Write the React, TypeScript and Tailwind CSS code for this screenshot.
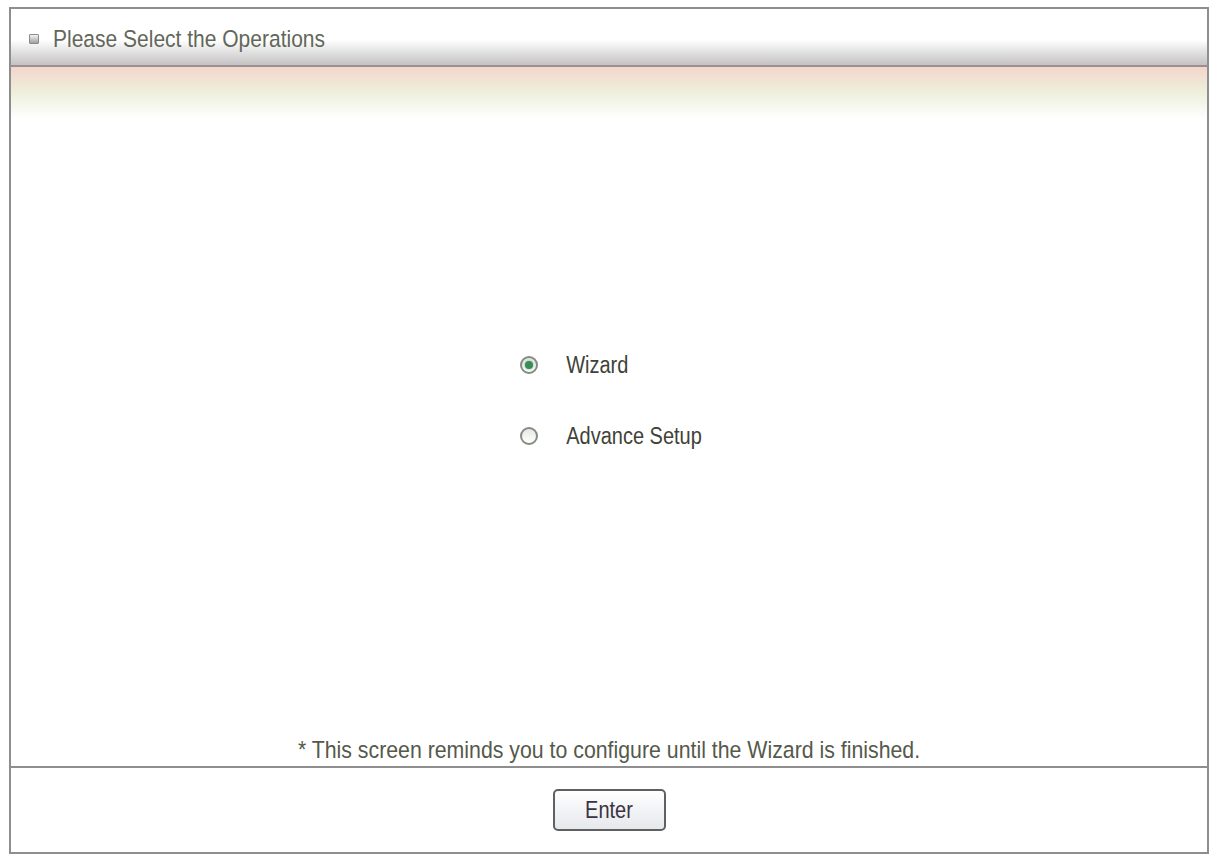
import React, { useState } from "react";

const font = { fontFamily: "'Liberation Sans Narrow', 'Liberation Sans', Arial, sans-serif" };

function Radio({ checked }: { checked: boolean }) {
  return (
    <span className="flex h-[18px] w-[18px] items-center justify-center rounded-full border-2 border-[#858a82] bg-gradient-to-b from-[#e4e8e3] to-white">
      {checked && <span className="h-[8px] w-[8px] rounded-full bg-[#3c8a5a] shadow-[0_0_3px_#6cc08a]" />}
    </span>
  );
}

const options = ["Wizard", "Advance Setup"];

export default function App() {
  const [mode, setMode] = useState("Wizard");

  return (
    <div className="h-[856px] w-[1212px] bg-white pl-[9px] pt-[7px]" style={font}>
      <div className="flex h-[847px] w-[1200px] flex-col border-2 border-[#8e8e8e]">
        {/* title bar */}
        <div className="flex h-[58px] items-center gap-[14px] border-b-2 border-[#9a9090] bg-gradient-to-b from-white via-white via-55% to-[#c4c2c2] pl-[18px] pt-[4px]">
          <span className="h-[10px] w-[10px] rounded-[1px] border border-[#8a8a8a] bg-gradient-to-b from-[#f4f4f4] to-[#a0a0a0]" />
          <span className="origin-left scale-y-[1.15] text-[21px] text-[#63675a]">Please Select the Operations</span>
        </div>
        <div className="h-[52px] bg-gradient-to-b from-[#f3d6cb] via-[#eef0dd] to-white" />

        {/* choices */}
        <div className="flex flex-1 flex-col items-center">
          <div className="mt-[234px] flex flex-col gap-[47px] pl-[4px]">
            {options.map((o) => (
              <label key={o} className="flex cursor-pointer items-center gap-[28px]" onClick={() => setMode(o)}>
                <Radio checked={mode === o} />
                <span className="scale-y-[1.15] text-[20px] leading-[24px] text-[#3f4238]">{o}</span>
              </label>
            ))}
          </div>
          <p className="mt-auto mb-[4px] scale-y-[1.15] text-[21.3px] leading-[24px] text-[#55594b]">
            * This screen reminds you to configure until the Wizard is finished.
          </p>
        </div>

        <div className="flex h-[86px] items-center justify-center border-t-2 border-[#8e8e8e]">
          <button className="h-[42px] w-[113px] rounded-[5px] border-2 border-[#5f6060] bg-gradient-to-b from-white to-[#e6e8ec] text-[20px] text-[#3b3342]">
            <span className="inline-block scale-y-[1.15]">Enter</span>
          </button>
        </div>
      </div>
    </div>
  );
}
